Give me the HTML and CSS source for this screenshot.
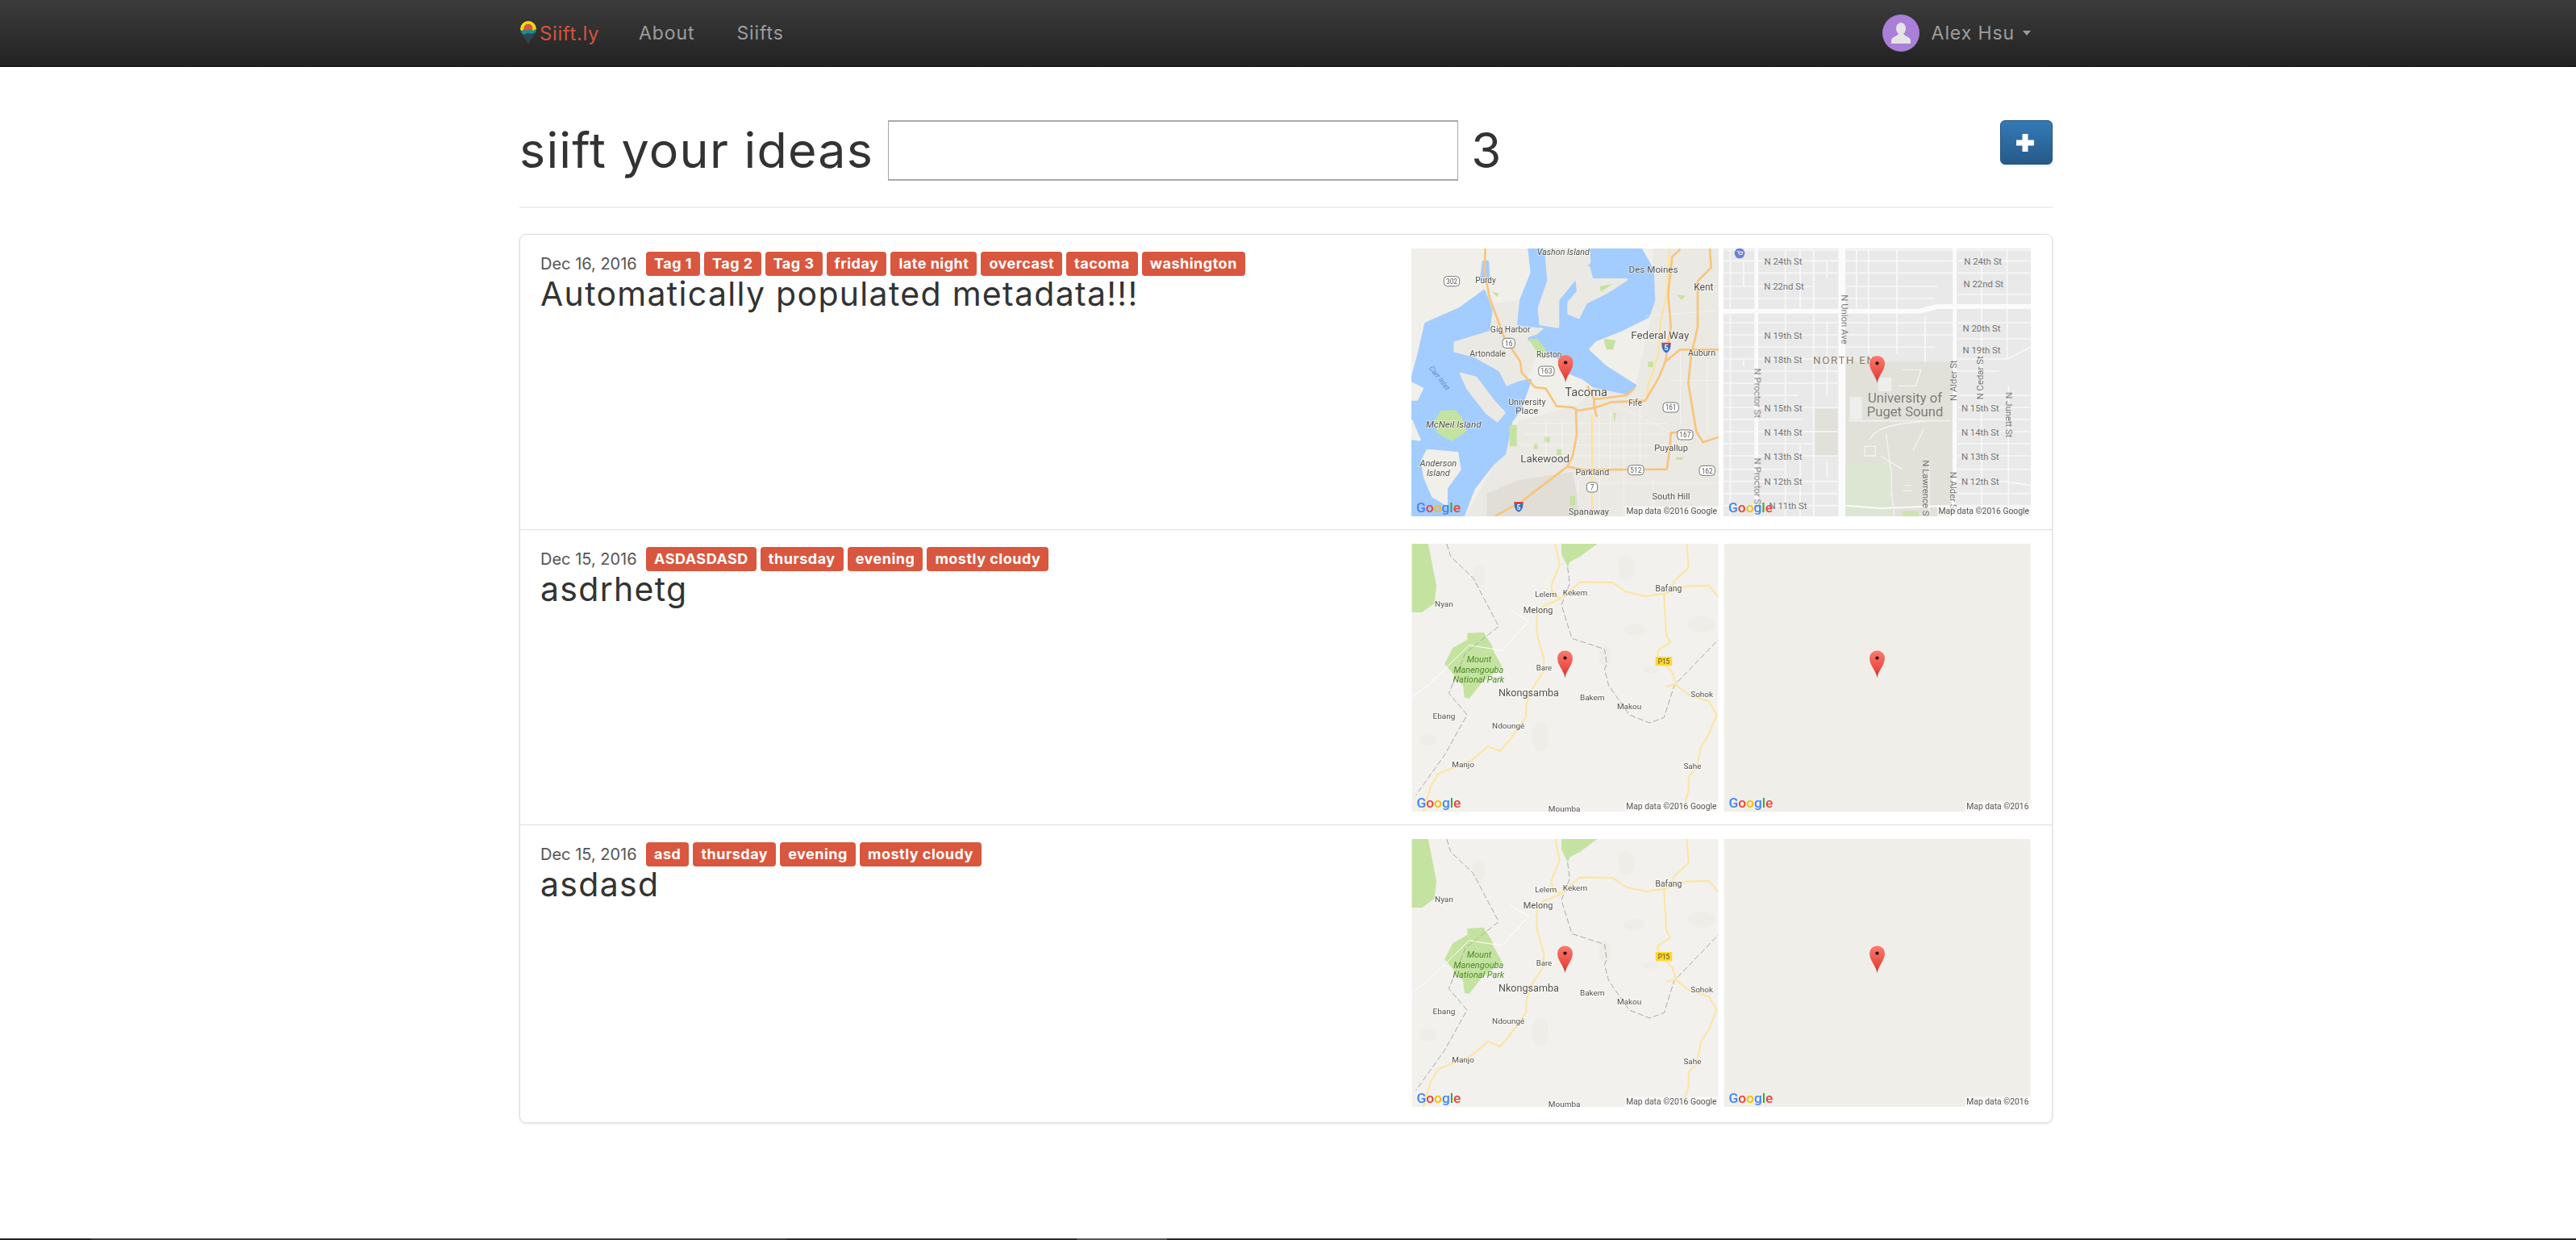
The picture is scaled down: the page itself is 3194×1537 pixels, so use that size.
FILE: index.html
```html
<!DOCTYPE html>
<html lang="en">
<head>
    <meta charset="UTF-8">
    <title>Siift.ly</title>
    <link rel="stylesheet" href="styles.css">
</head>
<body>
    <!-- map artwork, used by the rows below -->
    <svg class="sprites" xmlns="http://www.w3.org/2000/svg">
        <defs>
            <linearGradient id="pinFill" x1="0" y1="0" x2="0" y2="1">
                <stop offset="0" stop-color="#fb7a6e"/>
                <stop offset="0.6" stop-color="#ec5148"/>
                <stop offset="1" stop-color="#c9362e"/>
            </linearGradient>
            <symbol id="pin" viewBox="0 0 57 103">
                <path d="M28.5 103C26 76 0 56 0 28.5A28.5 28.5 0 0 1 57 28.5C57 56 31 76 28.5 103Z" fill="url(#pinFill)"/>
                <circle cx="28.5" cy="28" r="6.5" fill="#2a1210"/>
            </symbol>
            <symbol id="shieldI" viewBox="0 0 38 44">
                <path d="M2 3H36C38 18 36 34 19 43C2 34 0 18 2 3Z" fill="#3b6fb8" stroke="#fff" stroke-width="2"/>
                <path d="M2 3H36L36.5 10H1.5Z" fill="#d9453c"/>
                <text x="19" y="32" class="shield-5">5</text>
            </symbol>
            <symbol id="map-tacoma" viewBox="0 9 1143 996">
                <rect x="0" y="9" width="1143" height="996" fill="#f1efea"/>
                <path fill="#ebe9e4" d="M400 650L620 590L680 520L830 540L890 260L900 9H1143V1005H200Z"/>
                <path class="land" d="M300 220L440 200L480 330L440 470L400 510L350 530L320 470L230 420L150 400L150 350L290 300Z"/>
                <path fill="#e1ded8" d="M280 920L400 870L600 840L630 1005H280Z"/>
                <path class="water" d="M0 510L30 400L55 290L180 235L270 170L295 240L285 310L150 350L150 400L230 420L320 470L350 530L400 510L440 500L400 610L370 650L345 770L300 810L230 900L190 1005H0Z"/>
                <path class="water" d="M440 9H850L895 90L900 200L880 260L780 310L680 350L650 385L720 450L830 520L800 545L680 520L640 490L590 470L560 420L500 385L440 345L470 335L510 300L400 290L410 200L450 100Z"/>
                <path class="water" d="M270 60L282 60L285 130L262 120Z"/>
                <path class="land" d="M500 9H660L662 60L610 120L545 200L545 300L480 290L475 230L510 130Z"/>
                <path class="land" d="M610 80L660 80L672 125L800 125L730 170L650 210L622 265L585 250L585 210L620 170Z"/>
                <path class="land" d="M185 475L240 490L300 570L345 620L320 650L280 620L210 530Z"/>
                <path class="land-l" d="M60 760L170 770L180 830L130 900L130 960L80 930L50 860L40 800Z"/>
                <path class="land-l" d="M0 510L40 530L20 570L0 570ZM0 650L30 720L0 715Z"/>
                <path fill="#c5e3a0" d="M85 650L110 612L165 610L190 640L205 690L150 725L95 695Z"/>
                <path fill="#c5e3a0" d="M435 345L470 345L510 400L490 420L465 390Z"/>
                <path fill="#c5e3a0" d="M365 665L392 665L392 745L365 745ZM715 345L760 350L750 385L725 385ZM495 710L515 710L515 730L495 730ZM540 755L560 755L560 778L540 778ZM455 735L470 735L470 755L455 755ZM700 150L750 140L705 170ZM985 180L1020 185L1005 200ZM590 930L610 930L610 965L590 965ZM880 430L900 430L900 450L880 450ZM750 620L762 620L755 655ZM300 170L325 175L320 190ZM985 785L1010 785L1010 795L985 795Z"/>
                <g class="minor">
                    <path d="M430 660H950M420 700H950M410 740H950M420 780H900M700 620V1000M740 620V830M790 640V1000M850 600V830M560 640V820M500 640V820M700 880H1143M900 870V1005M1000 380V660M1100 420V700M960 500H1143M870 260L1143 240M760 590L960 690M620 870V1005"/>
                </g>
                <path class="road-y" d="M672 630V1005M960 9L950 180L925 290L920 400L880 520L875 570M965 690V750"/>
                <path class="road" d="M275 9L272 90L290 190L345 340L405 430L410 470L460 525L500 530L540 595L600 600L620 612L680 602L745 580L870 575L920 490L945 430L965 300L955 180L970 40L1000 12"/>
                <path class="road" d="M612 612L615 700L600 780L580 820L410 950L310 1005"/>
                <path class="road" d="M580 820L640 832L950 830L962 750L965 695L1000 690"/>
                <path class="road" d="M1110 9L1115 80L1065 130L1065 300L1040 410L1030 510L1060 690L1085 730L1143 710M1143 385L1000 385L945 430"/>
                <path class="road" d="M680 570L800 555L830 530M655 520L680 570L680 600L690 635"/>
                <rect class="shield" x="121" y="113" width="58" height="36" rx="12"/><text class="shield-t" x="150" y="141">302</text>
                <rect class="shield" x="339" y="343" width="46" height="36" rx="12"/><text class="shield-t" x="362" y="371">16</text>
                <rect class="shield" x="473" y="447" width="58" height="36" rx="12"/><text class="shield-t" x="502" y="475">163</text>
                <rect class="shield" x="936" y="582" width="58" height="36" rx="12"/><text class="shield-t" x="965" y="610">161</text>
                <rect class="shield" x="989" y="684" width="58" height="36" rx="12"/><text class="shield-t" x="1018" y="712">167</text>
                <rect class="shield" x="806" y="815" width="58" height="36" rx="12"/><text class="shield-t" x="835" y="843">512</text>
                <rect class="shield" x="1071" y="817" width="58" height="36" rx="12"/><text class="shield-t" x="1100" y="845">162</text>
                <rect class="shield" x="652" y="879" width="40" height="36" rx="12"/><text class="shield-t" x="672" y="907">7</text>
                <use href="#shieldI" x="929" y="356" width="38" height="44"/>
                <use href="#shieldI" x="380" y="948" width="38" height="44"/>
                <text class="lbl it" font-size="32" x="565" y="33">Vashon Island</text>
                <text class="lbl" font-size="35" x="900" y="100">Des Moines</text>
                <text class="lbl" font-size="36" x="1087" y="165">Kent</text>
                <text class="lbl" font-size="30" x="276" y="137">Purdy</text>
                <text class="lbl" font-size="31" x="368" y="320">Gig Harbor</text>
                <text class="lbl" font-size="31" x="284" y="412">Artondale</text>
                <text class="lbl" font-size="30" x="512" y="415">Ruston</text>
                <text class="lbl" font-size="40" x="925" y="345">Federal Way</text>
                <text class="lbl" font-size="32" x="1080" y="408">Auburn</text>
                <text class="lbl" font-size="44" x="650" y="558">Tacoma</text>
                <text class="lbl" font-size="32" x="430" y="592">University</text>
                <text class="lbl" font-size="34" x="430" y="625">Place</text>
                <text class="lbl" font-size="30" x="833" y="595">Fife</text>
                <text class="lbl it" font-size="35" x="157" y="676">McNeil Island</text>
                <text class="lbl it" font-size="33" x="100" y="818">Anderson</text>
                <text class="lbl it" font-size="33" x="100" y="856">Island</text>
                <text class="lbl-water" font-size="27" x="105" y="500" transform="rotate(52 105 490)">Carr Inlet</text>
                <text class="lbl" font-size="33" x="966" y="762">Puyallup</text>
                <text class="lbl" font-size="40" x="497" y="805">Lakewood</text>
                <text class="lbl" font-size="32" x="673" y="853">Parkland</text>
                <text class="lbl" font-size="33" x="966" y="943">South Hill</text>
                <text class="lbl" font-size="33" x="660" y="998">Spanaway</text>
                <use href="#pin" x="545" y="405" width="57" height="103"/>
                <text class="gl" x="18" y="990"><tspan fill="#4285f4">G</tspan><tspan fill="#ea4335">o</tspan><tspan fill="#fbbc05">o</tspan><tspan fill="#4285f4">g</tspan><tspan fill="#34a853">l</tspan><tspan fill="#ea4335">e</tspan></text>
                <rect class="attr-bg" x="795" y="968" width="348" height="37"/>
                <text class="attr" x="1137" y="997">Map data ©2016 Google</text>
            </symbol>
            <symbol id="map-north-end" viewBox="15 9 1143 996">
                <rect x="15" y="9" width="1143" height="996" fill="#e9e9e9"/>
                <rect x="470" y="430" width="395" height="575" fill="#e1e1da"/>
                <rect x="355" y="605" width="85" height="175" fill="#e1e1da"/>
                <rect x="470" y="810" width="170" height="195" fill="#dde6d2"/>
                <rect x="680" y="985" width="60" height="20" fill="#cfe3b0"/>
                <path class="street" d="M15 15H1158M15 55H440M15 100H440M15 150H350M15 195H440M15 285H440M15 330H440M15 375H440M15 420H350M15 465H440M15 510H440M15 555H290M15 600H440M15 645H310M15 690H440M15 735H350M15 780H440M15 830H245M15 875H440M15 920H440M15 965H440M470 55H870M470 100H870M470 150H810M470 195H800M470 285H870M470 330H870M470 375H800M885 55H1158M885 100H1158M885 180H1158M885 285H1158M885 345H1158M885 420H1070L1158 375M885 465H1040M885 555H1158M885 600H1158M885 645H1158M885 690H1158M885 735H1158M885 780H1158M885 830H1158M885 875H1060L1158 890M885 920H1158M885 965H1158"/>
                <path class="street" d="M40 15V230M90 60V150M245 15V620M300 15V230M350 15V1005M400 60V120M400 280V560M400 800V860M245 690V1005M300 740V1005M510 15V230M555 15V400M660 15V400M765 260V430M975 15V1005M1070 15V420M1075 520V1005M40 250V1005M90 420V445"/>
                <path class="campus" d="M560 720C570 690 620 670 680 660L780 650M680 460H750L730 520L665 520M540 745H580V780H540ZM620 700L640 850V930M760 680L720 760M600 780L680 830M640 910L650 1005M690 890H715M680 910H715M480 650H860M780 800V1000"/>
                <rect x="590" y="490" width="50" height="50" rx="4" fill="#eeeeec"/>
                <rect x="485" y="560" width="45" height="85" rx="4" fill="#eeeeec"/>
                <path class="artery" stroke-width="18" d="M15 242H745L810 225H1158"/>
                <path class="artery" stroke-width="26" d="M455 9V1005"/>
                <path class="artery" stroke-width="14" d="M137 9V1005M875 9V840L868 1005"/>
                <path class="artery" stroke-width="6" d="M470 965L600 975L865 965"/>
                <circle cx="75" cy="27" r="19" fill="#6a7fd8"/>
                <path d="M65 19H70L73 31H84L87 22H72" fill="none" stroke="#fff" stroke-width="3"/>
                <text class="st" x="237" y="69">N 24th St</text><text class="st" x="240" y="161">N 22nd St</text>
                <text class="st" x="237" y="344">N 19th St</text><text class="st" x="237" y="434">N 18th St</text>
                <text class="st" x="237" y="614">N 15th St</text><text class="st" x="237" y="705">N 14th St</text>
                <text class="st" x="237" y="796">N 13th St</text><text class="st" x="237" y="887">N 12th St</text>
                <text class="st" x="255" y="978">N 11th St</text>
                <text class="st" x="980" y="70">N 24th St</text><text class="st" x="982" y="153">N 22nd St</text>
                <text class="st" x="975" y="318">N 20th St</text><text class="st" x="975" y="398">N 19th St</text>
                <text class="st" x="970" y="614">N 15th St</text><text class="st" x="970" y="705">N 14th St</text>
                <text class="st" x="970" y="796">N 13th St</text><text class="st" x="970" y="887">N 12th St</text>
                <text class="st" x="453" y="273" transform="rotate(90 453 273)">N Union Ave</text>
                <text class="st" x="129" y="547" transform="rotate(90 129 547)">N Proctor St</text>
                <text class="st" x="129" y="880" transform="rotate(90 129 880)">N Proctor St</text>
                <text class="st" x="882" y="500" transform="rotate(-90 882 500)">N Alder St</text>
                <text class="st" x="982" y="490" transform="rotate(-90 982 490)">N Cedar St</text>
                <text class="st" x="1064" y="628" transform="rotate(90 1064 628)">N Junett St</text>
                <text class="st" x="756" y="905" transform="rotate(90 756 905)">N Lawrence St</text>
                <text class="st" x="858" y="915" transform="rotate(90 858 915)">N Alder St</text>
                <text class="district" x="480" y="438">NORTH END</text>
                <text class="campus-t" x="690" y="582">University of</text>
                <text class="campus-t" x="690" y="632">Puget Sound</text>
                <use href="#pin" x="558" y="408" width="57" height="103"/>
                <text class="gl" x="33" y="990"><tspan fill="#4285f4">G</tspan><tspan fill="#ea4335">o</tspan><tspan fill="#fbbc05">o</tspan><tspan fill="#4285f4">g</tspan><tspan fill="#34a853">l</tspan><tspan fill="#ea4335">e</tspan></text>
                <rect class="attr-bg" x="810" y="968" width="348" height="37"/>
                <text class="attr" x="1152" y="997">Map data ©2016 Google</text>
            </symbol>
            <symbol id="map-nkongsamba" viewBox="0 0 1143 999">
                <rect width="1143" height="999" fill="#f2f1ed"/>
                <g fill="#eeede8">
                    <ellipse cx="480" cy="720" rx="30" ry="55"/><ellipse cx="720" cy="420" rx="22" ry="40"/>
                    <ellipse cx="1080" cy="300" rx="50" ry="30"/><ellipse cx="830" cy="320" rx="40" ry="22"/>
                    <ellipse cx="60" cy="730" rx="30" ry="24"/><ellipse cx="800" cy="90" rx="30" ry="45"/>
                    <ellipse cx="890" cy="470" rx="30" ry="14"/><ellipse cx="250" cy="120" rx="24" ry="40"/>
                </g>
                <path fill="#c5e3a0" d="M0 0H61L92 158L84 223L38 256H0ZM558 0H692L627 48L589 68L582 88L558 38Z"/>
                <path fill="#c5e3a0" d="M207 333L268 330L298 378L306 403L337 458L260 518L214 578L196 573L191 528L122 448L153 388L207 358Z"/>
                <path class="thin" d="M0 573L61 528L214 378L337 398L367 363L436 288L367 248"/>
                <path class="dash" d="M130 0L145 48L229 128L324 308L199 408L138 558L206 638L122 788L15 938"/>
                <path class="dash" d="M581 88L589 148L558 228L597 353L719 393L727 448L719 468L734 528L811 638L887 668L941 648L979 528L1143 358"/>
                <path class="road-p" d="M535 0L551 78L520 158L527 193L558 203M558 203L490 233L467 263L467 338L493 428L490 478L444 548L428 598L425 648L383 708L352 748L329 773L283 756L222 808L99 858L69 908L43 999"/>
                <path class="road-p" d="M558 203L627 143L750 145L796 178L872 196L941 186L1025 158L1109 156L1143 198M1025 0L1033 88L980 138L971 158"/>
                <path class="road-p" d="M941 186L949 338L964 368L918 398L918 428L971 478L987 528L1033 563L1109 588L1137 638L1109 708L1078 758L1063 838L1033 868L1033 918L1010 999M949 533L987 523"/>
                <rect x="909" y="421" width="62" height="34" rx="3" fill="#fdd835"/>
                <text class="p15" x="940" y="447">P15</text>
                <text class="lbl" font-size="30" x="120" y="234">Nyan</text>
                <text class="lbl" font-size="30" x="500" y="200">Lelem</text>
                <text class="lbl" font-size="30" x="609" y="194">Kekem</text>
                <text class="lbl" font-size="31" x="958" y="178">Bafang</text>
                <text class="lbl" font-size="33" x="471" y="258">Melong</text>
                <text class="lbl" font-size="29" x="493" y="472">Bare</text>
                <text class="lbl-park" font-size="33" x="251" y="443">Mount</text>
                <text class="lbl-park" font-size="33" x="249" y="481">Manengouba</text>
                <text class="lbl-park" font-size="33" x="249" y="517">National Park</text>
                <text class="lbl" font-size="38" x="436" y="570">Nkongsamba</text>
                <text class="lbl" font-size="30" x="673" y="584">Bakem</text>
                <text class="lbl" font-size="30" x="811" y="618">Makou</text>
                <text class="lbl" font-size="30" x="1082" y="572">Sohok</text>
                <text class="lbl" font-size="30" x="120" y="654">Ebang</text>
                <text class="lbl" font-size="30" x="360" y="689">Ndoungé</text>
                <text class="lbl" font-size="30" x="191" y="833">Manjo</text>
                <text class="lbl" font-size="30" x="1047" y="839">Sahe</text>
                <text class="lbl" font-size="30" x="569" y="1000">Moumba</text>
                <use href="#pin" x="543" y="398" width="57" height="103"/>
                <text class="gl" x="18" y="984"><tspan fill="#4285f4">G</tspan><tspan fill="#ea4335">o</tspan><tspan fill="#fbbc05">o</tspan><tspan fill="#4285f4">g</tspan><tspan fill="#34a853">l</tspan><tspan fill="#ea4335">e</tspan></text>
                <rect class="attr-bg" x="795" y="962" width="348" height="37"/>
                <text class="attr" x="1137" y="991">Map data ©2016 Google</text>
            </symbol>
            <symbol id="map-blank" viewBox="0 0 1143 999">
                <rect width="1143" height="999" fill="#f0eee8"/>
                <use href="#pin" x="543" y="398" width="57" height="103"/>
                <text class="gl" x="18" y="984"><tspan fill="#4285f4">G</tspan><tspan fill="#ea4335">o</tspan><tspan fill="#fbbc05">o</tspan><tspan fill="#4285f4">g</tspan><tspan fill="#34a853">l</tspan><tspan fill="#ea4335">e</tspan></text>
                <rect class="attr-bg" x="900" y="962" width="243" height="37"/>
                <text class="attr" x="1137" y="991">Map data ©2016</text>
            </symbol>
        </defs>
    </svg>

    <nav class="navbar">
        <div class="container nav-inner">
            <a class="brand" href="#">
                <svg class="brand-logo" viewBox="0 0 20 29" aria-hidden="true">
                    <path d="M10 29C8 23 0 17 0 10A10 10 0 0 1 20 10C20 17 12 23 10 29Z" fill="#2f4353"/>
                    <path d="M0 10A10 10 0 0 1 20 10L19 12H1Z" fill="#f4d90c"/>
                    <circle cx="10" cy="9" r="5.5" fill="#d9573f"/>
                    <path d="M1 13L5 10L8 12L11 10L15 12L19 10L19.5 14L14 16L9 15L5 17L1.5 15Z" fill="#1d8c8c"/>
                </svg>
                <span>Siift.ly</span>
            </a>
            <a class="nav-link" href="#">About</a>
            <a class="nav-link" href="#">Siifts</a>
            <a class="nav-user" href="#">
                <svg class="avatar" viewBox="0 0 46 46" aria-hidden="true">
                    <circle cx="23" cy="23" r="23" fill="#a97fd8"/>
                    <ellipse cx="23" cy="17.500" rx="6" ry="7.500" fill="#e4e4e4"/>
                    <path d="M11 36V32C11 28 18 27 20 24H26C28 27 35 28 35 32V36Z" fill="#e4e4e4"/>
                </svg>
                <span>Alex Hsu</span>
                <i class="caret"></i>
            </a>
        </div>
    </nav>

    <main class="container">
        <header class="page-head">
            <h1>siift your ideas</h1>
            <input class="idea-input" type="text">
            <span class="idea-count">3</span>
            <button class="add-btn" type="button" aria-label="Add">
                <svg viewBox="0 0 22 22" aria-hidden="true"><path d="M7.500 0H14.500V7.500H22V14.500H14.500V22H7.500V14.500H0V7.500H7.500Z" fill="#fff"/></svg>
            </button>
        </header>

        <ul class="siift-list">
            <li class="siift">
                <div class="siift-text">
                    <div class="siift-meta">
                        <span class="siift-date">Dec 16, 2016</span>
                        <span class="tag">Tag 1</span><span class="tag">Tag 2</span><span class="tag">Tag 3</span><span class="tag">friday</span><span class="tag">late night</span><span class="tag">overcast</span><span class="tag">tacoma</span><span class="tag">washington</span>
                    </div>
                    <h3>Automatically populated metadata!!!</h3>
                </div>
                <div class="siift-maps">
                    <svg class="map"><use href="#map-tacoma"/></svg>
                    <svg class="map"><use href="#map-north-end"/></svg>
                </div>
            </li>
            <li class="siift">
                <div class="siift-text">
                    <div class="siift-meta">
                        <span class="siift-date">Dec 15, 2016</span>
                        <span class="tag">ASDASDASD</span><span class="tag">thursday</span><span class="tag">evening</span><span class="tag">mostly cloudy</span>
                    </div>
                    <h3>asdrhetg</h3>
                </div>
                <div class="siift-maps">
                    <svg class="map"><use href="#map-nkongsamba"/></svg>
                    <svg class="map"><use href="#map-blank"/></svg>
                </div>
            </li>
            <li class="siift">
                <div class="siift-text">
                    <div class="siift-meta">
                        <span class="siift-date">Dec 15, 2016</span>
                        <span class="tag">asd</span><span class="tag">thursday</span><span class="tag">evening</span><span class="tag">mostly cloudy</span>
                    </div>
                    <h3>asdasd</h3>
                </div>
                <div class="siift-maps">
                    <svg class="map"><use href="#map-nkongsamba"/></svg>
                    <svg class="map"><use href="#map-blank"/></svg>
                </div>
            </li>
        </ul>
    </main>

    <footer class="footer-strip"></footer>
</body>
</html>
```
FILE: styles.css
```css
* {
    box-sizing: border-box;
}
html, body {
    height: 100%;
}
body {
    margin: 0;
    display: flex;
    flex-direction: column;
    min-height: 100vh;
    overflow: hidden;
    background: #fff;
    color: #333;
    font-family: Inter, "Open Sans", sans-serif;
}
a {
    text-decoration: none;
}
.sprites {
    display: block;
    width: 0;
    height: 0;
}
.container {
    width: 1901px;
    margin-left: 644px;
}

/* navbar */
.navbar {
    height: 83px;
    flex: none;
    background: linear-gradient(to bottom, #3c3c3c, #222);
    border-bottom: 1px solid #080808;
}
.nav-inner {
    height: 82px;
    display: flex;
    align-items: center;
    padding-right: 27px;
    font-size: 23px;
    letter-spacing: 0.9px;
}
.brand {
    display: flex;
    align-items: center;
    width: 148px;
    color: #d2543e;
    font-size: 24px;
    letter-spacing: 0.6px;
}
.brand-logo {
    width: 20px;
    height: 29px;
    margin: -1px 4px 0 1px;
}
.nav-link {
    color: #9d9d9d;
    margin-right: 52px;
}
.nav-user {
    margin-left: auto;
    display: flex;
    align-items: center;
    color: #9d9d9d;
    margin-top: -1px;
}
.avatar {
    width: 46px;
    height: 46px;
    margin-right: 15px;
}
.caret {
    width: 0;
    height: 0;
    margin-left: 10px;
    border-top: 6px solid #9d9d9d;
    border-left: 5.500px solid transparent;
    border-right: 5.500px solid transparent;
}

/* heading row */
.page-head {
    display: flex;
    align-items: flex-start;
    margin-top: 66px;
    padding-bottom: 32px;
    border-bottom: 2px solid #eee;
    color: #333;
}
.page-head h1 {
    margin: 0 18px 0 0;
    font-size: 61px;
    line-height: 75px;
    font-weight: 400;
    letter-spacing: 1.2px;
}
.idea-input {
    width: 707px;
    height: 75px;
    border: 1px solid #a9a9a9;
    border-width: 2px 1px 2px 1px;
    background: #fff;
}
.idea-count {
    margin-left: 16px;
    font-size: 60px;
    line-height: 75px;
}
.add-btn {
    margin-left: auto;
    width: 65px;
    height: 55px;
    padding: 0;
    border: 1px solid #245580;
    border-radius: 6px;
    background: linear-gradient(to bottom, #337ab7, #265a88);
    box-shadow: 0 2px 3px rgba(0, 0, 0, 0.08);
}
.add-btn svg {
    display: block;
    width: 22px;
    height: 22px;
    margin: 0 0 0 19px;
}

/* list */
.siift-list {
    list-style: none;
    margin: 32px 0 0;
    padding: 0;
    border: 1px solid #ddd;
    border-radius: 8px;
    box-shadow: 0 1px 3px rgba(0, 0, 0, 0.12);
}
.siift {
    display: flex;
    padding: 17px 26px 16px 25px;
    border-top: 1px solid #ddd;
}
.siift:first-child {
    border-top: 0;
}
.siift:last-child {
    padding-bottom: 19px;
}
.siift-text {
    flex: 1;
    min-width: 0;
}
.siift-meta {
    display: flex;
    align-items: center;
    margin-top: 4px;
}
.siift-date {
    width: 131px;
    font-size: 20px;
    color: #555;
}
.tag {
    height: 30px;
    margin-right: 5px;
    padding: 0 10px;
    border-radius: 4px;
    background: #d9573f;
    color: #fff;
    font-size: 18px;
    font-weight: 700;
    line-height: 30px;
    letter-spacing: 0.5px;
}
.siift h3 {
    margin: 0;
    font-size: 41px;
    line-height: 44px;
    font-weight: 400;
    letter-spacing: 1.3px;
    color: #333;
}
.siift-maps {
    display: flex;
    gap: 6px;
    flex: none;
}
.map {
    display: block;
    width: 381px;
    height: 332px;
    filter: blur(0.4px);
}

/* map artwork */
.road, .road-y, .road-p, .street, .artery, .campus, .minor path, .thin, .dash {
    fill: none;
    stroke-linejoin: round;
}
.water {
    fill: #a3ccff;
    stroke: #a3ccff;
    stroke-width: 14;
    stroke-linejoin: round;
}
.land {
    fill: #ebe9e4;
    stroke: #ebe9e4;
    stroke-width: 10;
    stroke-linejoin: round;
}
.land-l {
    fill: #f1efea;
    stroke: #f1efea;
    stroke-width: 10;
    stroke-linejoin: round;
}
.road {
    stroke: #f7c57a;
    stroke-width: 8;
}
.road-y {
    stroke: #fbe3a0;
    stroke-width: 7;
}
.road-p {
    stroke: #fbe6a8;
    stroke-width: 7;
}
.minor path {
    stroke: #fff;
    stroke-width: 2;
    opacity: 0.7;
}
.street {
    fill: none;
    stroke: #f8f8f8;
    stroke-width: 5;
}
.artery {
    stroke: #fbfbfb;
}
.campus {
    stroke: #f4f4f2;
    stroke-width: 4;
}
.thin {
    stroke: #fff;
    stroke-width: 3;
}
.dash {
    stroke: #a9a9a6;
    stroke-width: 3;
    stroke-dasharray: 22 9;
}
.shield {
    fill: #fff;
    stroke: #777;
    stroke-width: 3;
}
.shield-t, .shield-5, .lbl, .lbl-water, .lbl-park, .st, .district, .campus-t, .attr, .gl, .p15 {
    font-family: Roboto, sans-serif;
}
.shield-t {
    font-size: 25px;
    fill: #555;
    text-anchor: middle;
}
.shield-5 {
    font-size: 26px;
    font-weight: 700;
    fill: #fff;
    text-anchor: middle;
}
.lbl {
    fill: #4f4f4b;
    stroke: #fff;
    stroke-width: 5px;
    stroke-opacity: 0.65;
    paint-order: stroke;
    text-anchor: middle;
}
.lbl.it, .lbl-water, .lbl-park {
    font-style: italic;
}
.lbl-water {
    fill: #5a8ccc;
    text-anchor: middle;
}
.lbl-park {
    fill: #4c8a28;
    text-anchor: middle;
}
.st {
    font-size: 34px;
    fill: #747474;
    text-anchor: middle;
}
.district {
    font-size: 40px;
    letter-spacing: 5px;
    fill: #8f7b5f;
    text-anchor: middle;
}
.campus-t {
    font-size: 50px;
    fill: #7b7b78;
    text-anchor: middle;
}
.p15 {
    font-size: 25px;
    fill: #5c4a10;
    text-anchor: middle;
}
.gl {
    font-size: 52px;
    font-weight: 500;
}
.attr {
    font-size: 31px;
    fill: #555;
    text-anchor: end;
}
.attr-bg {
    fill: #fff;
    opacity: 0.6;
}

.footer-strip {
    margin-top: auto;
    height: 2px;
    flex: none;
    background: linear-gradient(to right, #222 113px, #3a3a3a 113px, #3a3a3a 975px, #2a2a2a 975px, #2a2a2a 1335px, #555 1335px, #555 1447px, #252525 1447px);
}
```
